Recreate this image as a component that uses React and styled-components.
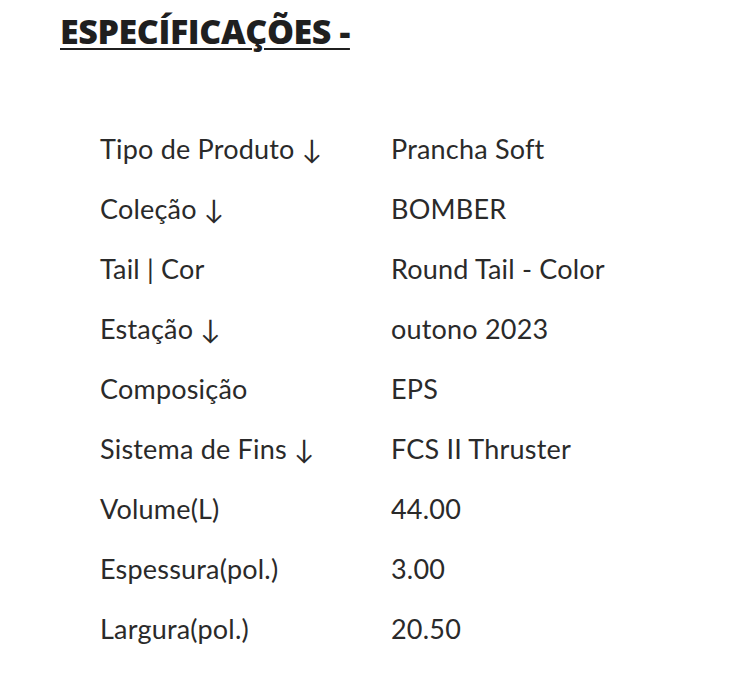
import React from "react";
import styled, { createGlobalStyle } from "styled-components";

const Global = createGlobalStyle`
  html, body { margin: 0; padding: 0; background: #fff; }
  body { font-family: "Lato", sans-serif; color: #222; }
`;

const Page = styled.div`
  width: 748px;
  height: 700px;
  box-sizing: border-box;
  padding: 10px 0 0 60px;
`;

const Heading = styled.h2`
  margin: 0;
  display: inline-block;
  font-family: "Open Sans", sans-serif;
  font-weight: 800;
  font-size: 34px;
  line-height: 42px;
  color: #1f1f1f;
  letter-spacing: -0.4px;
  text-decoration: underline;
  text-decoration-thickness: 2px;
  text-underline-offset: 4px;
`;

const Table = styled.div`
  display: grid;
  grid-template-columns: 291px auto;
  grid-auto-rows: 60px;
  align-items: center;
  margin: 66px 0 0 40px;
  font-size: 27px;
  letter-spacing: 0.2px;
  color: #2a2a2a;
`;

const Cell = styled.div`
  white-space: nowrap;
`;

const rows = [
  ["Tipo de Produto ↓", "Prancha Soft"],
  ["Coleção ↓", "BOMBER"],
  ["Tail | Cor", "Round Tail - Color"],
  ["Estação ↓", "outono 2023"],
  ["Composição", "EPS"],
  ["Sistema de Fins ↓", "FCS II Thruster"],
  ["Volume(L)", "44.00"],
  ["Espessura(pol.)", "3.00"],
  ["Largura(pol.)", "20.50"],
];

export default function App() {
  return (
    <Page>
      <Global />
      <Heading>ESPECÍFICAÇÕES -</Heading>
      <Table>
        {rows.map(([k, v]) => (
          <React.Fragment key={k}>
            <Cell>{k}</Cell>
            <Cell>{v}</Cell>
          </React.Fragment>
        ))}
      </Table>
    </Page>
  );
}
